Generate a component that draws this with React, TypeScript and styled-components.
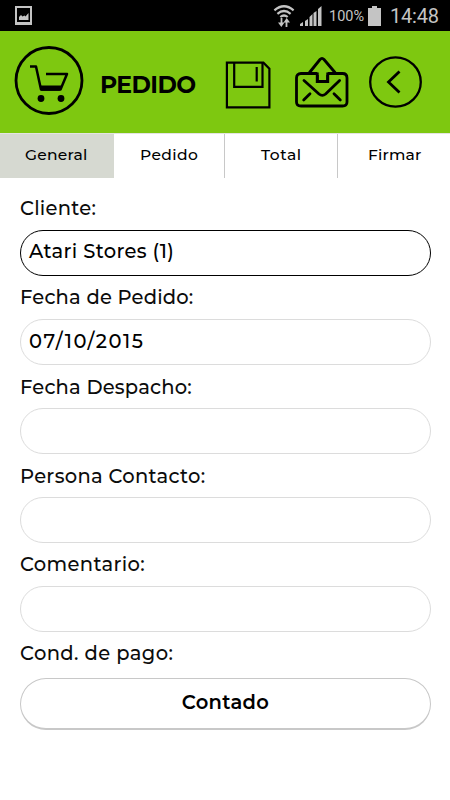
import React from "react";
import styled, { createGlobalStyle } from "styled-components";

const GlobalStyle = createGlobalStyle`
  * { box-sizing: border-box; }
  body { margin: 0; background: #fff; font-family: Montserrat, Inter, sans-serif; color: #000; }
`;

const Screen = styled.div`
  width: 450px;
  height: 800px;
  background: #fff;
  overflow: hidden;
`;

const StatusBar = styled.div`
  height: 31px;
  padding: 0 11px 0 15px;
  background: #000;
  color: #c4c4c4;
  display: flex;
  align-items: center;
  font-family: Roboto, sans-serif;
  svg { display: block; flex: none; }
`;

const StatusIcons = styled.div`
  margin-left: auto;
  display: flex;
  align-items: center;
`;

const Wifi = styled.svg`
  margin-right: 5px;
`;

const Battery = styled.span`
  width: 36px;
  margin: 3px 3px 0 7px;
  font-size: 14.5px;
  line-height: 20px;
  white-space: nowrap;
`;

const Clock = styled.span`
  width: 49px;
  margin: 1px 0 0 9px;
  font-size: 20px;
  letter-spacing: -0.2px;
  line-height: 24px;
  white-space: nowrap;
`;

const Header = styled.header`
  height: 102px;
  padding-left: 14px;
  background: #7ec810;
  display: flex;
  align-items: flex-start;
  svg { display: block; flex: none; }
`;

const Title = styled.h1`
  flex: none;
  width: 139px;
  margin: 40px 0 0 2px;
  padding-left: 14px;
  font-size: 23.5px;
  line-height: 27px;
  font-weight: 700;
  letter-spacing: -0.6px;
`;

const HeaderButton = styled.button<{ $top: number; $gap: number }>`
  flex: none;
  border: 0;
  padding: 0;
  background: none;
  color: #000;
  margin: ${(p) => p.$top}px ${(p) => p.$gap}px 0 0;
`;

const Tabs = styled.nav`
  height: 45px;
  border-top: 1px solid #e4e4e2;
  display: grid;
  grid-template-columns: 114px 111px 113px 1fr;
`;

const Tab = styled.button<{ $active?: boolean; $spacing: number; $indent: number }>`
  border: 0;
  border-right: 1px solid ${(p) => (p.$active ? "#d6d9d1" : "#c8c8c8")};
  background: ${(p) => (p.$active ? "#d6d9d1" : "#fff")};
  padding: 11px 0 0 ${(p) => p.$indent}px;
  font: 500 15.5px/20px Montserrat, Inter, sans-serif;
  letter-spacing: ${(p) => p.$spacing}px;
  color: #000;
  display: flex;
  align-items: flex-start;
  &:last-child { border-right: 0; }
`;

const Form = styled.main`
  padding: 9px 19px 0 20px;
`;

const Field = styled.div`
  height: 89px;
  display: flex;
  flex-direction: column;
`;

const Label = styled.label<{ $spacing: number; $raised?: boolean }>`
  flex: none;
  height: 43px;
  padding-top: ${(p) => (p.$raised ? 9 : 10)}px;
  font-size: 19.5px;
  line-height: 24px;
  font-weight: 500;
  letter-spacing: ${(p) => p.$spacing}px;
  white-space: nowrap;
  color: #0c0c0c;
`;

const Box = styled.div<{ $focused?: boolean; $spacing: number }>`
  height: 46px;
  flex: none;
  padding: ${(p) => (p.$focused ? 8 : 9)}px 8px 0;
  border: 1px solid ${(p) => (p.$focused ? "#000" : "#dcdcdc")};
  border-radius: 23px;
  background: #fff;
  font-size: 19.5px;
  line-height: 24px;
  font-weight: 500;
  letter-spacing: ${(p) => p.$spacing}px;
`;

const PayButton = styled.button`
  flex: none;
  width: 100%;
  height: 52px;
  margin-top: 3px;
  padding: 0 0 3px;
  border: 1px solid #c8c8c8;
  border-bottom-width: 2px;
  border-radius: 26px;
  background: #fff;
  color: #000;
  font: 600 19.5px/24px Montserrat, Inter, sans-serif;
  letter-spacing: 0.3px;
`;

const fields = [
  { label: "Cliente:", value: "Atari Stores (1)", spacing: 0.25, valueSpacing: 0.35, focused: true, raised: true },
  { label: "Fecha de Pedido:", value: "07/10/2015", spacing: 0.2, valueSpacing: 1.5, raised: true },
  { label: "Fecha Despacho:", value: "", spacing: 0.2, valueSpacing: 0 },
  { label: "Persona Contacto:", value: "", spacing: 0.3, valueSpacing: 0 },
  { label: "Comentario:", value: "", spacing: 0.35, valueSpacing: 0, raised: true },
];

export default function App() {
  return (
    <Screen>
      <GlobalStyle />
      <StatusBar>
        <svg width="17" height="20" viewBox="0 0 17 20">
          <path d="M1 1h15v17H1z" fill="none" stroke="#c4c4c4" strokeWidth="2" />
          <path d="M1 16h15v2H1z" fill="#c4c4c4" />
          <path d="M4 14v-3l2-2 1.5 1.5 2-1 1 1L13.5 7v7z" fill="#c4c4c4" />
        </svg>
        <StatusIcons>
          <Wifi width="22" height="24" viewBox="0 0 22 24">
            <g fill="none" stroke="#c4c4c4" strokeWidth="2.2">
              <path d="M1.4 6.3Q11-1.8 20.6 6.3M4.4 9.8Q11 4.2 17.6 9.8M7.3 13Q11 10 14.7 13" />
              <path d="M8.5 14v7M13.5 16v7" strokeWidth="1.8" />
            </g>
            <path d="M5 18.5h6.5l-3.2 4.5zM10.5 18.5H17l-3.3-4.5z" fill="#c4c4c4" />
          </Wifi>
          <svg width="22" height="22" viewBox="0 0 22 22">
            <path d="M0 21v-2l3-2v4zM5 21v-5l3-2v7zM9.5 21v-9l3-3v12zM13.5 21V8l3-2v15zM18 21V4l3.5-3v20z" fill="#c4c4c4" />
          </svg>
          <Battery>100%</Battery>
          <svg width="13" height="20" viewBox="0 0 13 20">
            <path d="M4 0h5v2h4v18H0V2h4z" fill="#c4c4c4" />
          </svg>
          <Clock>14:48</Clock>
        </StatusIcons>
      </StatusBar>
      <Header>
        <HeaderButton $top={15} $gap={0} aria-label="Carrito">
          <svg width="70" height="70" viewBox="0 0 70 70">
            <circle cx="35" cy="34.5" r="33" fill="none" stroke="#000" strokeWidth="2.8" />
            <path d="M16 20.5h6l5 23h19.5l6.5-15.500H32" fill="none" stroke="#000" strokeWidth="2.5" strokeLinejoin="round" />
            <path d="M26 39.5h22l-2.3 5.3H27.2z" />
            <circle cx="27" cy="52.5" r="3.4" />
            <circle cx="47" cy="52.5" r="3.4" />
          </svg>
        </HeaderButton>
        <Title>PEDIDO</Title>
        <HeaderButton $top={29} $gap={24} aria-label="Guardar">
          <svg width="46" height="49" viewBox="0 0 46 49" fill="none" stroke="#000" strokeWidth="2.2">
            <path d="M1.9 2.6h36.5l6 6v38.7H1.9z" />
            <path d="M9.2 2.3v24.5h28.3V2.3" />
            <path d="M31.7 7v14.5" />
          </svg>
        </HeaderButton>
        <HeaderButton $top={25} $gap={20} aria-label="Enviar">
          <svg width="54" height="53" viewBox="0 0 54 53" fill="none" stroke="#000" strokeWidth="2.8" strokeLinecap="round" strokeLinejoin="round">
            <path d="M22.3 17.5H6q-4.500 0-4.500 4.500v24q0 4 4.500 4h41.500q4.500 0 4.500-4V22q0-4.500-4.500-4.500H32.700v8H22.300z" strokeLinejoin="miter" />
            <path d="M22.3 17.500H32.700" stroke="#7ec810" strokeWidth="3" strokeLinecap="butt" />
            <path d="M22.3 16.500v9h10.400v-9" strokeLinecap="butt" strokeLinejoin="miter" />
            <path d="M14.500 16.500 25 3.500q2-2.200 4 0l11 13" />
            <path d="M9 24.500l15 13.500q3.300 2.800 6.600 0l14-13.500M8.700 44l6.300-6.300M45.300 44l-6.300-6.300" />
          </svg>
        </HeaderButton>
        <HeaderButton $top={25} $gap={0} aria-label="Volver">
          <svg width="54" height="53" viewBox="0 0 54 53" fill="none" stroke="#000">
            <ellipse cx="26.5" cy="26" rx="25.3" ry="24.6" strokeWidth="2.3" />
            <path d="M30.5 15.5 19.5 26l11 10.500" strokeWidth="2.8" />
          </svg>
        </HeaderButton>
      </Header>
      <Tabs>
        <Tab $active $spacing={0.25} $indent={25}>General</Tab>
        <Tab $spacing={0.4} $indent={26}>Pedido</Tab>
        <Tab $spacing={0.6} $indent={36}>Total</Tab>
        <Tab $spacing={0.2} $indent={30}>Firmar</Tab>
      </Tabs>
      <Form>
        {fields.map((f) => (
          <Field key={f.label}>
            <Label $spacing={f.spacing} $raised={f.raised}>{f.label}</Label>
            <Box $focused={f.focused} $spacing={f.valueSpacing}>{f.value}</Box>
          </Field>
        ))}
        <Field>
          <Label $spacing={0.4} $raised>Cond. de pago:</Label>
          <PayButton>Contado</PayButton>
        </Field>
      </Form>
    </Screen>
  );
}
